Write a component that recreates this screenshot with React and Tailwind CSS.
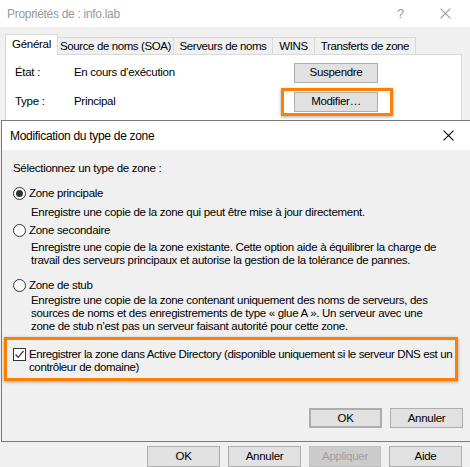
// Propriétés de zone DNS + boîte "Modification du type de zone"

const FONT = { fontFamily: '"Liberation Sans", Arial, sans-serif' }

function WinButton({ children, className = '', disabled = false }) {
  return (
    <div
      className={`flex items-center justify-center border ${
        disabled ? 'border-[#bfbfbf] bg-[#cccccc] text-[#a0a0a0]' : 'border-[#adadad] bg-[#e1e1e1] text-black'
      } ${className}`}
    >
      {children}
    </div>
  )
}

function CloseGlyph({ color = '#000', size = 10 }) {
  return (
    <svg width={size} height={size} viewBox="0 0 10 10">
      <path d="M0.5 0.5 L9.5 9.5 M9.5 0.5 L0.5 9.5" stroke={color} strokeWidth="1" />
    </svg>
  )
}

function Radio({ checked }) {
  return (
    <span className="grid h-[13px] w-[13px] shrink-0 place-items-center rounded-full border border-[#333] bg-white">
      {checked && <span className="h-[7px] w-[7px] rounded-full bg-[#333]" />}
    </span>
  )
}

const TABS = [
  { label: 'Général', w: 'w-[53px]', active: true },
  { label: 'Source de noms (SOA)', w: 'w-[116px]' },
  { label: 'Serveurs de noms', w: 'w-[99px]' },
  { label: 'WINS', w: 'w-[42px]' },
  { label: 'Transferts de zone', w: 'w-[101px]' },
]

export default function App() {
  return (
    <div
      className="relative h-[467px] w-[470px] overflow-hidden bg-[#f0f0f0] text-[11.5px] tracking-[-0.3px] whitespace-nowrap text-black"
      style={FONT}
    >
      {/* fenêtre de fond */}
      <div className="flex h-full flex-col">
        <div className="flex h-[27px] items-center bg-white pl-[7px] text-[12px] text-[#999]">
          <span className="flex-1">Propriétés de : info.lab</span>
          <span className="mr-[36px] text-[13px] text-[#999]">?</span>
          <span className="mr-[19px]">
            <CloseGlyph color="#999" size={11} />
          </span>
        </div>

        <div className="flex h-[27px] items-end pl-[5px]">
          {TABS.map((t, i) => (
            <div
              key={t.label}
              className={`flex ${t.w} shrink-0 items-center justify-center border-t border-[#d9d9d9] ${
                i === 0 ? 'border-l' : ''
              } border-r ${
                t.active
                  ? 'relative z-10 -mb-px h-[21px] bg-white pb-[1px]'
                  : 'h-[17px] bg-[#f0f0f0] pt-[1px] tracking-[-0.4px]'
              }`}
            >
              {t.label}
            </div>
          ))}
        </div>

        <div className="mr-[8px] ml-[5px] flex-1 border border-[#d9d9d9] bg-white">
          <div className="flex h-[28px] items-center pt-[8px]">
            <span className="w-[68px] pl-[9px]">État :</span>
            <span className="w-[220px]">En cours d’exécution</span>
            <WinButton className="h-[20px] w-[84px]">Suspendre</WinButton>
          </div>
          <div className="mt-[9px] flex h-[20px] items-center">
            <span className="w-[68px] pl-[9px]">Type :</span>
            <span className="w-[220px]">Principal</span>
            <div className="relative">
              <WinButton className="h-[20px] w-[84px]">Modifier…</WinButton>
              <div className="absolute -top-[4px] -right-[15px] -bottom-[4px] -left-[13px] border-[3px] border-[#ff8000] shadow-[0_1px_3px_rgba(0,0,0,0.35)]" />
            </div>
          </div>
        </div>

        <div className="flex h-[30px] justify-end gap-[8px] pt-[9px] pr-[8px]">
          <WinButton className="h-[21px] w-[73px]">OK</WinButton>
          <WinButton className="h-[21px] w-[73px]">Annuler</WinButton>
          <WinButton className="h-[21px] w-[72px]" disabled>
            Appliquer
          </WinButton>
          <WinButton className="h-[21px] w-[73px]">Aide</WinButton>
        </div>
      </div>

      {/* boîte de dialogue au premier plan */}
      <div className="absolute top-[120px] left-[1px] flex h-[322px] w-[480px] flex-col border border-[#7a7a7a] bg-[#f0f0f0]">
        <div className="flex h-[29px] shrink-0 items-center bg-white pl-[8px] text-[12px]">
          <span className="flex-1">Modification du type de zone</span>
          <span className="mr-[26px]">
            <CloseGlyph size={11} />
          </span>
        </div>

        <div className="flex flex-1 flex-col pl-[11px] leading-[13px]">
          <p className="mt-[12px]">Sélectionnez un type de zone :</p>

          <div className="mt-[12px] flex items-center gap-[3px]">
            <Radio checked />
            <span>Zone principale</span>
          </div>
          <p className="mt-[6px] pl-[18px]">Enregistre une copie de la zone qui peut être mise à jour directement.</p>

          <div className="mt-[5px] flex items-center gap-[3px]">
            <Radio />
            <span>Zone secondaire</span>
          </div>
          <p className="mt-[4px] pl-[18px]">
            Enregistre une copie de la zone existante. Cette option aide à équilibrer la charge de
            <br />
            travail des serveurs principaux et autorise la gestion de la tolérance de pannes.
          </p>

          <div className="mt-[12px] flex items-center gap-[3px]">
            <Radio />
            <span>Zone de stub</span>
          </div>
          <p className="mt-[2px] pl-[18px]">
            Enregistre une copie de la zone contenant uniquement des noms de serveurs, des
            <br />
            sources de noms et des enregistrements de type « glue A ». Un serveur avec une
            <br />
            zone de stub n’est pas un serveur faisant autorité pour cette zone.
          </p>

          <div className="mt-[4px] -ml-[9px] mr-[22px] flex gap-[3px] border-[3px] border-[#ff8000] pt-[8px] pb-[4px] pl-[6px] shadow-[0_1px_3px_rgba(0,0,0,0.35)]">
            <span className="grid h-[13px] w-[13px] shrink-0 place-items-center border border-[#333] bg-white">
              <svg width="11" height="11" viewBox="0 0 11 11">
                <path d="M1.5 5.5 L4.2 8.3 L9.5 2" fill="none" stroke="#333" strokeWidth="1.2" />
              </svg>
            </span>
            <span className="tracking-[-0.38px]">
              Enregistrer la zone dans Active Directory (disponible uniquement si le serveur DNS est un
              <br />
              contrôleur de domaine)
            </span>
          </div>

          <div className="mt-[27px] flex gap-[8px] pl-[296px]">
            <WinButton className="h-[20px] w-[73px] border-2 border-[#0078d7]">OK</WinButton>
            <WinButton className="h-[20px] w-[73px]">Annuler</WinButton>
          </div>
        </div>
      </div>
    </div>
  )
}
